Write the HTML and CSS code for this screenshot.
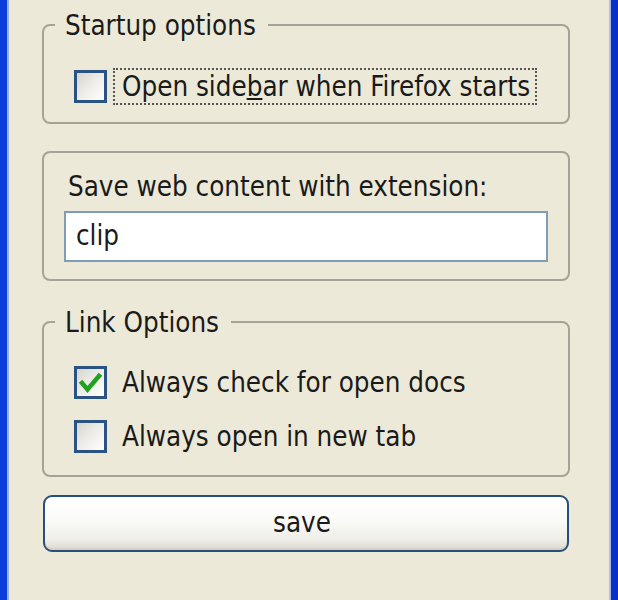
FILE: index.html
```html
<!DOCTYPE html>
<html lang="en">
<head>
<meta charset="utf-8">
<title>Options</title>
<link rel="stylesheet" href="styles.css">
</head>
<body>
<div class="window">
  <div class="client">
    <fieldset class="group group-startup">
      <legend class="group-title">Startup options</legend>
      <label class="option">
        <span class="box"></span>
        <span class="option-text focused">Open side<u>b</u>ar when Firefox starts</span>
      </label>
    </fieldset>

    <fieldset class="group group-ext">
      <div class="field-label">Save web content with extension:</div>
      <input class="textbox" type="text" value="clip">
    </fieldset>

    <fieldset class="group group-links">
      <legend class="group-title">Link Options</legend>
      <label class="option">
        <span class="box">
          <svg class="tick" viewBox="0 0 33 33" width="33" height="33"><polyline points="8,17 13.5,23.5 25,10" fill="none" stroke="#21a121" stroke-width="4.5" stroke-linecap="square" stroke-linejoin="miter"/></svg>
        </span>
        <span class="option-text">Always check for open docs</span>
      </label>
      <label class="option option-second">
        <span class="box"></span>
        <span class="option-text">Always open in new tab</span>
      </label>
    </fieldset>

    <button class="save-btn" type="button">save</button>
  </div>
</div>
</body>
</html>
```
FILE: styles.css
```css
html, body {
  margin: 0;
  padding: 0;
  background: #ece9d8;
}

body {
  font-family: "DejaVu Sans Condensed", "DejaVu Sans", sans-serif;
  font-size: 27.5px;
  color: #1a1a1a;
}

.window {
  height: 600px;
  box-sizing: border-box;
  border-left: 7px solid #0b3ddd;
  border-right: 7px solid #0a2fc4;
  display: flex;
}

.client {
  flex: 1;
  display: flex;
  flex-direction: column;
  padding: 10px 41px 0 35px;
  box-shadow: inset 2px 0 #9cb4ee, inset -2px 0 #a4bcf2;
}

.group {
  margin: 0;
  border: 2px solid #a4a397;
  border-radius: 8px;
  min-width: 0;
}

.group-title {
  padding: 0 12px 0 10px;
  line-height: 30px;
  font-size: 27.5px;
}

.group-startup {
  padding: 28px 20px 17px 11px;
}

.group-ext {
  margin-top: 27px;
  padding: 18px 20px 17px 20px;
}

.group-links {
  margin-top: 26px;
  padding: 27px 20px 20px 11px;
}

.option {
  display: flex;
  align-items: center;
  gap: 6px;
  height: 37px;
  margin-left: 19px;
}

.option-second {
  margin-top: 17px;
}

.box {
  width: 33px;
  height: 33px;
  box-sizing: border-box;
  border: 3px solid #2a5384;
  background: linear-gradient(135deg, #d6d5cd 0%, #ecebe6 45%, #ffffff 100%);
  position: relative;
  flex: none;
}

.tick {
  position: absolute;
  left: -3px;
  top: -3px;
}

.option-text {
  height: 37px;
  box-sizing: border-box;
  line-height: 33px;
  padding: 0 5px 0 7px;
  border: 2px dotted transparent;
  white-space: nowrap;
}

.option-text.focused {
  border-color: #555;
}

.field-label {
  line-height: 30px;
  padding-left: 4px;
}

.textbox {
  display: block;
  margin-top: 9.5px;
  width: 100%;
  height: 51px;
  box-sizing: border-box;
  border: 2px solid #7f9db9;
  background: #fff;
  font: inherit;
  color: #1a1a1a;
  padding: 0 0 2px 10px;
  outline: none;
}

.save-btn {
  margin: 18px 1px 0 1px;
  height: 57px;
  box-sizing: border-box;
  border: 2.5px solid #264f7c;
  border-radius: 9px;
  background: linear-gradient(180deg, #ffffff 0%, #fafaf7 45%, #efeee8 80%, #dcd8cc 100%);
  box-shadow: inset 0 -2px 0 #d8d2c4, inset 0 2px 0 #ffffff;
  font: inherit;
  color: #1a1a1a;
  padding: 0 8px 2px 0;
}
```
